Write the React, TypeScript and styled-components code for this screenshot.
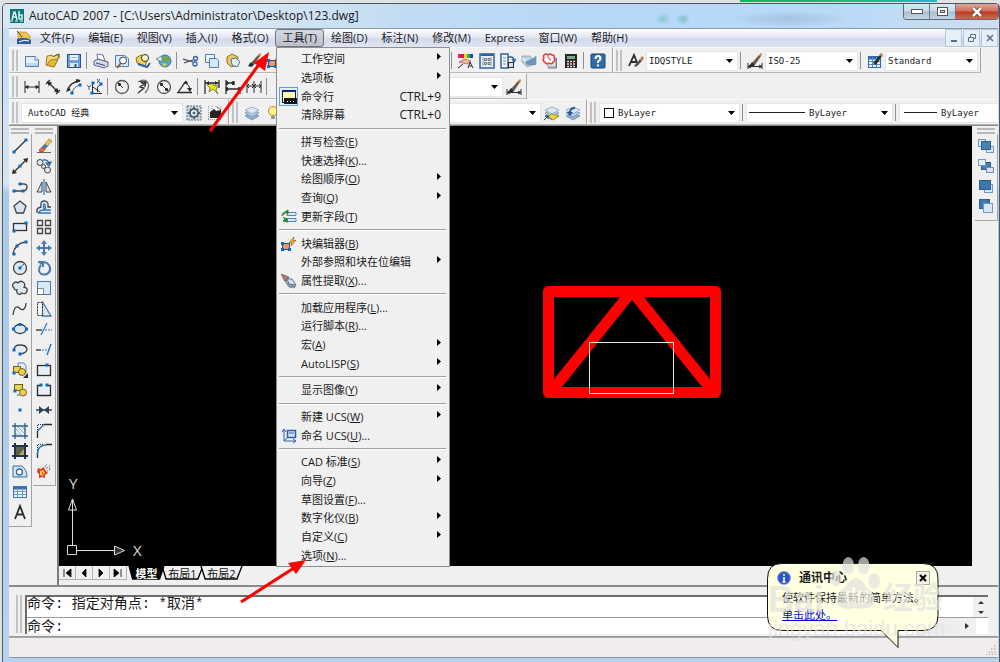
import React from "react";
import styled, { createGlobalStyle, css } from "styled-components";

const GlobalStyle = createGlobalStyle`
  *, *::before, *::after { box-sizing: border-box; }
  html, body { margin: 0; height: 100%; }
  body { background: #d9dcdc; overflow: hidden; }
  button, select, input { font: inherit; color: inherit; margin: 0; }
`;

const uiFont = `"Open Sans", "Noto Sans CJK SC", sans-serif`;
const monoFont = `"Liberation Mono", "Noto Sans CJK SC", monospace`;

/* ---------- icons ---------- */

const K = "#2b2b2b";
const B = "#2c62a3";
const L = "#d3e4f4";
const Y = "#f1cf4a";

const dot = (x: number, y: number, fill = "#0b6bc4") => (
  <rect x={x - 1.5} y={y - 1.5} width="3" height="3" fill={fill} />
);
const layers = (
  <>
    <path d="M1 11l7-3 7 3-7 4z" fill="#8fb2d4" stroke="#54769c" strokeWidth=".6" />
    <path d="M1 8l7-3 7 3-7 4z" fill="#b6cfe6" stroke="#54769c" strokeWidth=".6" />
    <path d="M1 5l7-3 7 3-7 4z" fill="#dce9f5" stroke="#6a8aae" strokeWidth=".6" />
  </>
);
const brush = (
  <>
    <path d="M5 10l7-8 2 1-6 9z" fill="#6b5a4c" />
    <path d="M12 2l2-2 1 1-1 3z" fill="#d07a35" />
    <path d="M2 13l3-4 3 3-3 2z" fill={K} />
  </>
);

const icons: Record<string, React.ReactNode> = {
  new: (
    <>
      <path d="M1.500 3.500h10l3 3v7h-13z" fill="#e2f0fb" stroke="#4f7fb0" />
      <path d="M2 10h12v3H2z" fill="#bcd7ee" />
      <path d="M11 3v4h4" fill="#fff" stroke="#4f7fb0" />
    </>
  ),
  open: (
    <>
      <path d="M2 3l5-1 1 2 6-3-1 5-4 8-8-2z" fill="#f3da7a" stroke="#9a7a1c" />
      <path d="M5 7l8-1-4 8-7-2z" fill="#e7b93a" stroke="#8b6a18" strokeWidth=".7" />
      <path d="M9 3l5-2v4" fill="none" stroke="#555" />
    </>
  ),
  save: (
    <>
      <rect x="1.500" y="1.500" width="13" height="13" fill="#6fa0d8" stroke="#24558f" />
      <rect x="4" y="2" width="8" height="5" fill="#eef5fb" />
      <path d="M5 4.500h6" stroke="#8fb2d8" />
      <rect x="4" y="10" width="8" height="4" fill="#dfeaf6" />
      <path d="M9.500 11v3" stroke="#24558f" strokeWidth="2" />
    </>
  ),
  print: (
    <>
      <path d="M4 1l6 1 2 6-7-1z" fill="#fff" stroke="#6777a5" />
      <path d="M1 8l4-2 10 3v4l-4 2-10-3z" fill="#d6dbea" stroke="#565f88" />
      <path d="M3 10l9 2.500" stroke="#3e4770" />
    </>
  ),
  preview: (
    <>
      <path d="M1.500 2.500h9l4 3v8h-13z" fill="#d9eaf8" stroke="#4f7fb0" />
      <circle cx="9" cy="7.500" r="3.500" fill="#f2f9ff" stroke="#445" />
      <path d="M7 10l-4 5" stroke="#a1532a" strokeWidth="2" />
    </>
  ),
  publish: (
    <>
      <path d="M1 5l5-3 7 3-3 8-8-3z" fill="#f0d052" stroke="#8a6a1c" />
      <circle cx="10" cy="5" r="3.500" fill="#fff6c9" stroke="#333" />
      <path d="M3 11l9 3 3-4" fill="none" stroke={B} strokeWidth="2" />
    </>
  ),
  globe: (
    <>
      <circle cx="9" cy="8" r="6" fill="#58a8cf" stroke="#38739a" />
      <path d="M8 3l4 1 1 4-4 1-3-3z" fill="#5eb74b" />
      <path d="M6 10l5 1-3 3z" fill="#f0c23b" />
      <path d="M10 3l3 2v3z" fill="#e2702f" />
      <path d="M0 6l6-3v6z" fill="#e8edf2" stroke="#667" strokeWidth=".7" />
    </>
  ),
  cut: (
    <>
      <path d="M0 6l10 3M1 10l9-3" stroke="#445" strokeWidth="1.300" />
      <circle cx="12.500" cy="5.500" r="2" fill="none" stroke={B} strokeWidth="1.300" />
      <circle cx="12" cy="11" r="2" fill="none" stroke={B} strokeWidth="1.300" />
    </>
  ),
  copyclip: (
    <>
      <path d="M1.500 1.500h9v8h-9z" fill="#eaf3fb" stroke="#4f7fb0" />
      <path d="M5.500 5.500h7l2 2v7h-9z" fill="#d7e8f7" stroke="#4f7fb0" />
    </>
  ),
  paste: (
    <>
      <path d="M2 4l5-3 6 3-1 8-6 2-4-4z" fill="#edc569" stroke="#93702a" />
      <path d="M6 6l5-1 4 4-3 5-5-2z" fill="#e3eef8" stroke="#577" />
    </>
  ),
  match: brush,
  block: (
    <>
      <rect x="1.500" y="7.500" width="7" height="6" fill="#f09468" stroke="#2c4f80" />
      <path d="M8 7l5-6-1 4 3-1-5 6 1-3z" fill="#f4ba1f" stroke="#6d5515" strokeWidth=".6" />
      {dot(1.5, 13.5)}
      {dot(8.5, 13.5)}
      {dot(1.5, 7.5)}
    </>
  ),
  props: (
    <>
      <path d="M0 1h3v4H0z" fill="#f0128c" />
      <path d="M3 1h3v4H3z" fill="#e71d1d" />
      <path d="M6 1h3v4H6z" fill="#f2d312" />
      <path d="M9 1h3v4H9z" fill="#28b839" />
      <path d="M12 1h3v4h-3z" fill="#283fd2" />
      <path d="M1 9l6-3 6 2-4 3z" fill="#f1b7a1" stroke="#9c4f43" strokeWidth=".7" />
      <path d="M0 15l5-4M10 15l2-6 3 6M11 13h3" stroke={K} fill="none" />
    </>
  ),
  design: (
    <>
      <rect x="1" y="1" width="14" height="14" fill="#e9f1f8" stroke={B} strokeWidth="1.500" />
      <path d="M2 2h12" stroke={B} strokeWidth="2" />
      <path d="M4 4v9M12 4v9" stroke="#7f9fc0" />
      <path d="M5.500 5.500h2v2h-2zM9 5.500h2v2H9zM5.500 9.500h2v2h-2zM9 9.500h2v2H9z" fill="#f6e7a0" stroke="#4b5a69" strokeWidth=".8" />
    </>
  ),
  palettes: (
    <>
      <rect x="1" y="1" width="7" height="14" fill="#f3f8fd" stroke={B} strokeWidth="1.500" />
      <path d="M3 5h3M3 8h3M3 11h3" stroke="#7a8a9a" />
      <path d="M8 4h3q3 0 3 4M12 6l2 3 2-3" fill="none" stroke={B} strokeWidth="1.300" />
      <rect x="8.500" y="9.500" width="5" height="5" fill="#d4e3ee" stroke={K} />
    </>
  ),
  sheetset: (
    <>
      <path d="M1 3h8l2 3 4-3v8l-9 3-5-5z" fill="#bcd2e2" stroke="#8097aa" strokeWidth=".7" />
      <path d="M4 9l11-5v8H6z" fill="#6c94b6" />
      <path d="M0 5l6 1-2 3z" fill="#e4ebef" />
    </>
  ),
  markup: (
    <>
      <path d="M6 5h8v9H6z" fill="#dfe3e8" stroke="#8a929c" />
      <path d="M14.500 5v10H6" fill="none" stroke="#6f7a86" />
      <path d="M2 2q2-2 4 0 2-2 4 0 3 0 2 3 2 2-1 4-1 3-4 1-3 2-4-1-3-1-1-4-1-2 0-3z" fill="#fff" stroke="#e2373b" strokeWidth="1.500" />
      <path d="M5 4q2-1 2 1t2 2" stroke="#e2373b" fill="none" />
    </>
  ),
  calc: (
    <>
      <rect x="2" y="1" width="12" height="14" fill="#2c2324" />
      <rect x="4" y="3" width="8" height="3" fill="#70b089" />
      <path d="M4 8.500h2m1 0h2m1 0h2M4 11h2m1 0h2m1 0h2M4 13.500h2m1 0h2m1 0h2" stroke="#e9d9d6" strokeWidth="1.300" />
    </>
  ),
  help: (
    <>
      <rect x="1" y="1" width="14" height="14" rx="1" fill="#2d6da8" stroke="#174775" />
      <path d="M5.500 6q0-3 2.500-3t2.500 2.500q0 1.500-2.500 3v1.500M8 11.500v2" fill="none" stroke="#fff" strokeWidth="2" />
    </>
  ),
  textstyle: (
    <>
      <path d="M1 13L6 2l4 10M3 9h5" fill="none" stroke={K} strokeWidth="1.800" />
      <path d="M6 13l6-7 2 2-6 6z" fill="#555" />
      <path d="M12 6l2-3 2 2-2 3z" fill="#c8793a" />
    </>
  ),
  dimstyle: (
    <>
      {brush}
      <path d="M1 10v6M15 10v6M1 13.500h14M4 12l-3 1.500L4 15M12 12l3 1.500L12 15" stroke={K} fill="none" />
    </>
  ),
  tablestyle: (
    <>
      <rect x="1.500" y="3.500" width="12" height="11" fill="#e5f0fa" stroke="#2d6cb1" />
      <path d="M2 5h11" stroke="#2d6cb1" strokeWidth="3" />
      <path d="M2 8.500h11M2 11.500h11M5.500 4v10M9.500 4v10" stroke="#4f8bc7" />
      <path d="M6 10l7-8 2 1-6 9z" fill={K} />
      <path d="M12 2l2-2 2 2-1 2z" fill="#c8793a" />
    </>
  ),
  dimlin: <path d="M1 2v12M15 2v12M1 8h14M4 6.500L1.500 8 4 9.500zM12 6.500L14.500 8 12 9.500z" fill={K} stroke={K} />,
  dimali: <path d="M1 5l4-4M11 15l4-4M3 3l10 10M3 3l1 3 2-2zM13 13l-1-3-2 2z" fill={K} stroke={K} strokeWidth="1.300" />,
  dimarc: (
    <>
      <path d="M2 11Q4 3 14 2" fill="none" stroke={K} strokeWidth="1.500" />
      <path d="M6 14q1-6 8-8" fill="none" stroke="#667" />
      {dot(6, 14)}
      {dot(14, 6)}
      <path d="M0 13l2-5 3 3zM15 1l-5-1v4z" fill={K} />
    </>
  ),
  dimord: (
    <>
      <path d="M5 14.500h10M5.500 14V4M6 8l7 5M10.500 13V8l4-3" stroke={K} fill="none" />
      <path d="M0 6l2 2 2-2M2 8v3M10 0l3 4M13 0l-3 4" stroke={B} fill="none" />
      {dot(5, 14)}
      {dot(14, 5)}
      {dot(6, 4)}
    </>
  ),
  dimrad: (
    <>
      <circle cx="8" cy="8" r="6.500" fill="none" stroke="#555" strokeWidth="1.300" />
      <path d="M9 9L4 4M4 4l3 1-2 2z" fill={K} stroke={K} />
    </>
  ),
  dimjog: (
    <>
      <path d="M3 3q7-4 10 1 2 5-3 10" fill="none" stroke="#777" strokeWidth="1.300" />
      <path d="M3 14l6-5-4-1 5-4M6 3l5 0-1 4z" fill="none" stroke={K} strokeWidth="1.300" />
    </>
  ),
  dimdia: (
    <>
      <circle cx="8" cy="8" r="6.500" fill="none" stroke="#555" strokeWidth="1.300" />
      <path d="M4 4l8 8M4 4l3 1-2 2zM12 12l-3-1 2-2z" fill={K} stroke={K} />
    </>
  ),
  dimang: (
    <>
      <path d="M15 13.500H1L9 2" fill="none" stroke={K} strokeWidth="1.300" />
      <path d="M8 4q5 2 5 8" fill="none" stroke={K} />
      <path d="M6 4l4-2 1 3zM10 9l5 0-2 4z" fill={K} />
    </>
  ),
  qdim: (
    <>
      <path d="M3 6l6-2 1 3 4-1-2 5 2 4-5-5-4 3 1-4z" fill="#e6e21f" stroke="#5b5a12" strokeWidth=".7" />
      <path d="M1 1v14M15 1v8M1 4h14" stroke={K} strokeWidth="1.300" />
      <path d="M2 4l3-2v4zM14 4l-3-2v4z" fill={K} />
    </>
  ),
  dimbase: <path d="M1 1v14M9 2v4M15 8v7M1 4h8M1 10h14M3 2.500L1 4l2 1.500M7 2.500L9 4 7 5.500M3 8.500L1 10l2 1.500M13 8.500l2 1.500-2 1.500" fill="none" stroke={K} strokeWidth="1.300" />,
  dimcont: <path d="M1 2v12M8 2v12M15 2v12M1 7h14M3 5L1 7l2 2M6 5l2 2-2 2M10 5L8 7l2 2M13 5l2 2-2 2" fill="none" stroke={K} />,
  gear: (
    <>
      <rect x="1" y="1" width="14" height="14" fill="#c8d8e4" stroke="#54687a" strokeDasharray="2 1" />
      <circle cx="8" cy="8" r="4" fill="#f6f8fa" stroke="#4e6272" strokeWidth="2" />
      <circle cx="8" cy="8" r="1.500" fill="#4e6272" />
      <path d="M8 2v2M8 12v2M2 8h2M12 8h2M4 4l1 1M12 4l-1 1M4 12l1-1M12 12l-1-1" stroke="#4e6272" strokeWidth="2" />
    </>
  ),
  myspace: (
    <>
      <path d="M1.500 1v14M1 14.500h14M5 1v3M9 1v2M14 1v3" stroke="#999" strokeDasharray="1 1" />
      <path d="M3 13V7l4-3 2 2 5-1v8z" fill="#252525" />
      <path d="M10 2l4 3" stroke="#666" />
    </>
  ),
  layers,
  bulb: (
    <>
      <circle cx="8" cy="6" r="4.500" fill="#fff38a" stroke="#b2941a" />
      <path d="M6 11h4v3H6z" fill="#9a9a9a" />
    </>
  ),
  layermake: (
    <>
      {layers}
      <path d="M4 11l4-2 7 2-6 4z" fill="#f0d42a" stroke="#88761d" strokeWidth=".6" />
      <path d="M0 15l4-4M1 11h3v3" stroke="#1c3e7c" fill="none" />
    </>
  ),
  layerprev: (
    <>
      {layers}
      <path d="M5 10q-1-7 5-7" fill="none" stroke="#25568f" strokeWidth="2" />
      <path d="M2 7h6l-3 4z" fill="#25568f" />
    </>
  ),
  line: (<><path d="M2 14L14 2" stroke={K} strokeWidth="1.300" />{dot(2, 14)}{dot(14, 2)}</>),
  xline: (<><path d="M1 15L15 1" stroke={K} strokeWidth="1.300" /><path d="M0 16l1-5 4 4zM16 0l-1 5-4-4z" fill={K} />{dot(8, 8)}</>),
  pline: (<><path d="M1 12h11q3-1 3-4 0-3-3-3H8" fill="none" stroke="#444" strokeWidth="1.300" />{dot(2, 12)}{dot(11, 12)}{dot(8, 5)}</>),
  polygon: <path d="M8 2l6 5-2.500 7h-7L2 7z" fill="#d8e3ee" stroke="#444" strokeWidth="1.300" />,
  rect: (<><rect x="1.500" y="4.500" width="13" height="7" fill="#e4edf5" stroke="#333" strokeWidth="1.300" />{dot(2, 12)}{dot(14, 4)}</>),
  arc: (<><path d="M1 14Q3 3 14 2" fill="none" stroke="#444" strokeWidth="1.300" />{dot(2, 14)}{dot(5, 6)}{dot(14, 2)}</>),
  circle: (<><circle cx="8" cy="8" r="6.500" fill="#dce8f3" stroke="#444" strokeWidth="1.300" /><path d="M8 8l4-4" stroke={B} />{dot(8, 8)}</>),
  cloud: <path d="M2 8q-3-3 0-5 2-2 4 0 2-3 5-1 3 2 1 5 4 1 3 4-1 4-5 2-2 2-4 1-2-2-1-4-3 0-3-2z" fill="#dde7f0" stroke="#444" strokeWidth="1.300" />,
  spline: <path d="M1 14Q2 5 6 6q4 4 6 2 2-2 2-6" fill="none" stroke="#444" strokeWidth="1.300" />,
  ellipse: (<><ellipse cx="8" cy="8" rx="6" ry="4.500" fill="#dce8f3" stroke="#444" strokeWidth="1.300" />{dot(1.5, 8)}{dot(8, 3.5)}{dot(14.5, 8)}</>),
  earc: (<><path d="M2 9q0-5 6-5t7 4q0 4-7 5" fill="#e3ebf3" stroke="#444" strokeWidth="1.300" />{dot(2, 9)}{dot(8, 13)}</>),
  insert: (
    <>
      <path d="M6 1h6l2 3v7H6z" fill="#e3edf6" stroke="#6a8aab" />
      <rect x="1.500" y="4.500" width="7" height="6" fill={Y} stroke="#6b6426" />
      <circle cx="10" cy="10" r="3.500" fill={Y} stroke="#6b6426" />
      {dot(2, 11)}
      <path d="M16 11v5h-5z" fill={K} />
    </>
  ),
  mkblock: (<><rect x="2.500" y="2.500" width="8" height="6" fill={Y} stroke="#6b6426" /><circle cx="11" cy="10.500" r="3.500" fill={Y} stroke="#6b6426" />{dot(3, 9)}<path d="M5 13h3" stroke={B} /></>),
  point: dot(8, 8),
  hatch: (
    <>
      <rect x="3.500" y="3.500" width="9" height="9" fill="#edf4fa" />
      <path d="M4 6l6 7M4 10l3 3M6 4l7 7M10 4l3 3" stroke="#5f93c0" strokeWidth=".8" />
      <path d="M3 0v16M13 0v16M0 3h16M0 13h16" stroke="#315b88" strokeWidth="1.300" />
    </>
  ),
  gradient: (
    <>
      <rect x="3" y="3" width="10" height="10" fill="#5f614b" />
      <path d="M6 13l7-8v8z" fill="#b5a95b" />
      <path d="M3 0v16M13 0v16M0 3h16M0 13h16" stroke="#23304a" strokeWidth="2" />
    </>
  ),
  region: (<><path d="M1 3h9q5 4 5 11H1z" fill={L} stroke="#3b6a9b" /><circle cx="7.500" cy="9" r="3" fill="#fff" stroke="#3b6a9b" strokeWidth="1.300" /></>),
  table: (<><rect x="1.500" y="2.500" width="13" height="11" fill="#eff6fc" stroke="#4174b0" /><path d="M1 4h14" stroke="#3b6fae" strokeWidth="3" /><path d="M2 7.500h12M2 10.500h12M5.500 4v9M10.500 4v9" stroke="#6998c9" /></>),
  mtext: <path d="M3 15L8 2l5 13M5 10.500h6" fill="none" stroke={K} strokeWidth="1.800" />,
  erase: (
    <>
      <path d="M1 14.500h14" stroke="#666" />
      <path d="M6 9l7-8 3 2-7 8z" fill="#e7c84d" stroke="#7b6a27" strokeWidth=".6" />
      <path d="M9 6l3 2-3 3-3-2z" fill="#4b79ab" />
      <path d="M3 12l3-3 3 2-2 3-3 0z" fill="#e4685a" stroke="#8e362e" strokeWidth=".6" />
    </>
  ),
  copy: (
    <>
      <circle cx="4" cy="4.500" r="3" fill="#dfe9f2" stroke="#444" />
      <circle cx="7.500" cy="8.500" r="2" fill="#dfe9f2" stroke="#444" />
      <circle cx="11.500" cy="12" r="3" fill="#dfe9f2" stroke="#444" />
      <path d="M7 2q5-1 6 4M10 5l3 3 2-4z" fill="none" stroke={B} strokeWidth="1.300" />
    </>
  ),
  mirror: (<><path d="M6 3v10H1z" fill="#d8e0e7" stroke="#444" /><path d="M10 3v10h5z" fill="#d8e0e7" stroke="#444" /><path d="M8 0v16" stroke="#2e87d2" strokeWidth="1.300" /></>),
  offset: (<><path d="M1 14v-3q0-2 4-3-1-6 3-6 5 0 4 6h3" fill="#e3edf6" stroke="#444" strokeWidth="1.300" /><path d="M3 14q0-3 5-3-1-6 0-6 2 0 1 6h6M2 14h13" fill="none" stroke="#2e77bd" strokeWidth="1.300" /></>),
  array: <path d="M1.500 1.500h5v5h-5zM9.500 1.500h5v5h-5zM1.500 9.500h5v5h-5zM9.500 9.500h5v5h-5z" fill="#eef2f6" stroke="#444" strokeWidth="1.300" />,
  move: <path d="M8 0l3 4H9v3h3V5l4 3-4 3V9H9v3h2l-3 4-3-4h2V9H4v2L0 8l4-3v2h3V4H5z" fill="#4a7bb0" />,
  rotate: <path d="M4 4q5-4 9 1 3 6-2 9-6 2-8-3 0-4 2-6M2 2h5v5" fill="none" stroke="#4a7bb0" strokeWidth="2" />,
  scale: (<><rect x="1.500" y="1.500" width="13" height="13" fill="#dbe9f5" stroke="#4a7bb0" /><rect x="1.500" y="8.500" width="6" height="6" fill="#fff" stroke={K} strokeDasharray="1 1" /></>),
  stretch: (<><path d="M6.500 1v14H15z" fill="#dbe9f5" stroke="#4a7bb0" strokeWidth="1.300" /><path d="M1.500 1.500h5v13h-5z" fill="#f3f6f9" stroke={K} strokeDasharray="2 1" /></>),
  trim: (<><path d="M0 9h6" stroke={K} strokeWidth="1.300" /><path d="M5 14L11 2" stroke="#2e77bd" strokeWidth="1.300" /><path d="M9 9h7" stroke="#2e77bd" strokeDasharray="2 1" /></>),
  extend: (<><path d="M0 9h5" stroke={K} strokeWidth="1.300" /><path d="M11 14l4-11" stroke="#2e77bd" strokeWidth="1.500" /><path d="M6 9h6" stroke="#2e77bd" strokeDasharray="2 1" /></>),
  breakpt: (<><rect x="1.500" y="3.500" width="13" height="10" fill="#e6eef6" stroke={K} strokeWidth="1.300" />{dot(11, 3)}</>),
  breakat: (<><path d="M5 3.500H1.500v10h13v-10H11" fill="#e6eef6" stroke={K} strokeWidth="1.300" />{dot(5, 3)}{dot(11, 3)}</>),
  join: (<><path d="M0 8h16" stroke={K} strokeWidth="1.300" /><path d="M3 4l5 4-5 4zM13 4L8 8l5 4z" fill="#23405f" /></>),
  chamfer: (<><path d="M1.500 15V8M8 1.500h8" stroke={K} strokeWidth="1.300" /><path d="M1.500 8L8 1.500" stroke="#2e77bd" strokeWidth="1.500" /><path d="M1.500 7V1.500H8" stroke={K} strokeDasharray="1 1" fill="none" /></>),
  fillet: (<><path d="M1.500 15v-5M10 1.500h6" stroke={K} strokeWidth="1.300" /><path d="M1.500 11q0-9 9-9" fill="none" stroke="#2e77bd" strokeWidth="1.500" /><path d="M1.500 7V1.500H8" stroke={K} strokeDasharray="1 1" fill="none" /></>),
  explode: (
    <>
      <path d="M2 5l3 1 3-2 1 3 3 3-3 2 0 3-3-1-3 1 0-4-2-2z" fill="#df3a25" />
      <path d="M4 8l3-1 2 3-2 3-3-1z" fill="#f4d04c" />
      <path d="M6 9l2 2-2 1z" fill="#df3a25" />
      <path d="M10 6l4-4M11 8l4-2M9 4l2-3M13 5l2 0" stroke="#555" strokeDasharray="1 1" />
    </>
  ),
  front: (
    <>
      <rect x=".5" y="1.500" width="7" height="7" fill="#dceaf6" stroke="#7896b8" />
      <rect x="8.500" y="8.500" width="7" height="6" fill="#dceaf6" stroke="#7896b8" />
      <rect x="3.500" y="3.500" width="9" height="8" fill="#4a7fb4" stroke="#2e5f92" />
    </>
  ),
  back: (
    <>
      <rect x="3.500" y="4.500" width="9" height="7" fill="#4a7fb4" stroke="#2e5f92" />
      <rect x=".5" y="1.500" width="7" height="6" fill="#e6f0f9" stroke="#7896b8" />
      <rect x="8.500" y="9.500" width="7" height="5" fill="#d6e6f5" stroke="#6c8db4" />
    </>
  ),
  above: (<><rect x="6.500" y="6.500" width="8" height="8" fill="#d6e8f6" stroke="#6e9ac4" /><rect x="1.500" y="2.500" width="11" height="9" fill="#3f76ae" stroke="#2e5f92" /></>),
  under: (<><rect x="1.500" y="1.500" width="10" height="9" fill="#3f76ae" stroke="#2e5f92" /><rect x="5.500" y="5.500" width="9" height="9" fill="#d6e8f6" stroke="#6e9ac4" /></>),
  cmdline: (
    <>
      <rect x="1.500" y="1.500" width="13" height="12" fill="#fdfbb4" stroke="#1a1a1a" />
      <path d="M1 2h14" stroke="#12227c" strokeWidth="2" />
      <path d="M3 9h13v6H3z" fill="#171717" />
      <path d="M6 12.500h1m2 0h1m2 0h1" stroke="#fff" />
    </>
  ),
  field: (
    <>
      <path d="M6 3.500h9v3H6zM6 9.500h9v3H6z" fill="#d9e9f7" stroke="#5683b0" />
      <path d="M1 7q0-4 5-4M7 1v4L4 3zM7 10q-4 1-5-2M2 12l5 1-2-4z" fill="#268a2d" stroke="#268a2d" />
    </>
  ),
  attr: (
    <>
      <path d="M0 1l8 3-2 4-3-1z" fill="#b07873" stroke="#69423e" strokeWidth=".6" />
      <path d="M6 6l5 0 4 6-7-1z" fill="#d6e4f0" stroke="#56718c" />
      <path d="M3 7l6 5 6 1-2 2-5-1z" fill="#8b9bb0" stroke="#5a6878" strokeWidth=".6" />
    </>
  ),
  ucs: (
    <>
      <path d="M3 13V2M3 13h11M1 4l2-3 2 3M12 11l3 2-3 2" stroke={B} fill="none" />
      <rect x="6.500" y="2.500" width="8" height="7" fill="#d5e6f5" stroke={B} strokeWidth="1.500" />
      <path d="M8 5h5M3 13l4-4" stroke={B} />
    </>
  ),
};

const IconSvg = styled.svg`
  display: block;
  width: 16px;
  height: 16px;
  flex: none;
`;
const Icon = ({ name }: { name: string }) => (
  <IconSvg viewBox="0 0 16 16" aria-hidden="true">{icons[name]}</IconSvg>
);

/* ---------- window frame ---------- */

const Desktop = styled.div`
  position: relative;
  display: flex;
  flex-direction: column;
  width: 100%;
  height: 100vh;
  min-height: 600px;
  background: #dfe2e2;
  overflow: hidden;
  font: 11px/16px ${uiFont};
  color: #1a1a1a;
`;
const DesktopStrip = styled.div`
  flex: none;
  height: 3px;
  display: flex;
  justify-content: flex-end;
  padding-right: 63px;
`;
const Progress = styled.div`
  width: 197px;
  height: 2px;
  background: linear-gradient(90deg, #10b65c, #19bd7b 60%, #23b7cf);
`;
const Frame = styled.div`
  flex: 1;
  min-height: 0;
  display: flex;
  flex-direction: column;
  margin-left: 2px;
  padding: 0 1px 4px 6px;
  border: 1px solid #4b5964;
  border-bottom: 0;
  border-radius: 5px 5px 0 0;
  background: linear-gradient(180deg, #c2ddf5 0, #d3e4f3 180px, #a9c9e8 190px, #b7d3ee 100%);
`;
const TitleBar = styled.header`
  flex: none;
  height: 24px;
  margin: 0 -1px 0 -6px;
  padding-left: 7px;
  display: flex;
  align-items: center;
  gap: 5px;
  border-radius: 4px 4px 0 0;
  font-size: 12px;
  background:
    radial-gradient(ellipse 8px 6px at 660px 15px, #86c9c9, transparent),
    radial-gradient(ellipse 7px 6px at 680px 15px, #7fc4c4, transparent),
    radial-gradient(ellipse 60px 8px at 786px 15px, #a6c2dd, transparent),
    linear-gradient(90deg, #d9e7f3 0, #e5eef5 12%, #c3dcf3 40%, #b6d7f7 60%, #b9d9f7 84%, #cfdfec 100%);
`;
const TitleText = styled.h1`
  flex: 1;
  margin: 0;
  font: inherit;
  white-space: nowrap;
  overflow: hidden;
`;
const WindowButtons = styled.div`
  align-self: flex-start;
  display: flex;
  height: 16px;
  border: 1px solid #5b6b7b;
  border-top: 0;
  border-radius: 0 0 4px 4px;
  overflow: hidden;
`;
const WindowButton = styled.button<{ $close?: boolean }>`
  width: ${(p) => (p.$close ? 42 : 26)}px;
  padding: 0;
  display: grid;
  place-items: center;
  border: 0;
  border-right: ${(p) => (p.$close ? 0 : 1)}px solid #6d7c8b;
  background: ${(p) =>
    p.$close
      ? "linear-gradient(#e0a699 0, #cf6d5b 48%, #b93a24 52%, #cf6a4b 100%)"
      : "linear-gradient(#dde8f1 0, #cad8e4 48%, #aabdcd 52%, #c4d6e4 100%)"};
`;

const Client = styled.div`
  flex: 1;
  min-height: 0;
  display: flex;
  flex-direction: column;
  background: #f0f0f0;
  border-top: 1px solid #8e9bac;
  border-bottom: 1px solid #8997a8;
`;
const MenuBar = styled.nav`
  flex: none;
  height: 18px;
  display: flex;
  align-items: stretch;
  padding-left: 7px;
  background: linear-gradient(#fdfdff, #e4e8f5 45%, #d3daec 55%, #dfe4f3);
`;
const MenuLogo = styled.span`
  margin-right: 1px;
  display: flex;
  align-items: center;
`;
const MenuButton = styled.button<{ $open?: boolean }>`
  padding: 0 6px;
  border: 1px solid ${(p) => (p.$open ? "#6f747d" : "transparent")};
  border-radius: 3px;
  line-height: 16px;
  white-space: nowrap;
  background: ${(p) => (p.$open ? "linear-gradient(#d4d8e1, #b9bfcb)" : "none")};
`;
const MdiButtons = styled.div`
  margin-left: auto;
  display: flex;
  gap: 1px;
`;
const MdiButton = styled.button`
  width: 17px;
  padding: 0;
  display: grid;
  place-items: center;
  border: 1px solid #b3c7da;
  background: #e6eef6;
`;

/* ---------- toolbars ---------- */

const Body = styled.div`
  position: relative;
  flex: 1;
  min-height: 0;
  display: flex;
  flex-direction: column;
`;
const ToolbarRow = styled.div`
  flex: none;
  height: 26px;
  display: flex;
  overflow: hidden;
`;
const Toolbar = styled.div<{ $grow?: boolean }>`
  flex: ${(p) => (p.$grow ? "1 0 auto" : "none")};
  display: flex;
  align-items: center;
  padding: 1px 0 0 2px;
  border: 1px solid #fafafa;
  border-right-color: #a5a5a5;
  border-bottom-color: #b6b6b6;
`;
const Grip = styled.span<{ $flat?: boolean }>`
  flex: none;
  ${(p) =>
    p.$flat
      ? css`
          width: 18px;
          height: 6px;
          border-top: 2px solid #b9b9b9;
          border-bottom: 2px solid #b9b9b9;
        `
      : css`
          width: 6px;
          height: 21px;
          margin-right: 3px;
          border-left: 2px solid #c2c2c2;
          border-right: 2px solid #c2c2c2;
        `}
`;
const ToolButton = styled.button`
  width: 21px;
  height: 20px;
  padding: 0;
  display: grid;
  place-items: center;
  border: 0;
  background: none;
`;
const Divider = styled.span`
  flex: none;
  width: 1px;
  height: 17px;
  margin: 0 3px 0 2px;
  background: #8f8f8f;
`;
const Covered = styled.span<{ $w: number }>`
  flex: none;
  width: ${(p) => p.$w}px;
`;
const ComboBox = styled.label<{ $w: number; $pad: number }>`
  position: relative;
  flex: none;
  width: ${(p) => p.$w}px;
  height: 20px;
  display: flex;
  align-items: center;
  gap: 4px;
  padding: 0 4px 0 ${(p) => p.$pad}px;
  background: #fff;
  border: 1px solid #e4e6ee;
  font: 9px/16px "DejaVu Sans Mono", "Noto Sans CJK SC", monospace;
  svg { flex: none; }
`;
const ComboSelect = styled.select`
  flex: 1;
  min-width: 0;
  padding: 0;
  border: 0;
  outline: 0;
  appearance: none;
  background: none;
`;
const Arrow = () => (
  <svg width="7" height="4" aria-hidden="true"><path d="M0 0h7L3.500 4z" fill="#000" /></svg>
);
type ComboProps = { w: number; label: string; value: string; mark?: React.ReactNode; pad?: number };
const Combo = ({ w, label, value, mark, pad = 2 }: ComboProps) => (
  <ComboBox $w={w} $pad={pad}>
    {mark}
    <ComboSelect aria-label={label} defaultValue={value}>
      <option>{value}</option>
    </ComboSelect>
    <Arrow />
  </ComboBox>
);
const Tools = ({ names }: { names: string }) => (
  <>
    {names.split(" ").map((n, i) =>
      n === "|" ? <Divider key={i} /> : (
        <ToolButton key={i} type="button" aria-label={n}><Icon name={n} /></ToolButton>
      )
    )}
  </>
);
const LineMark = ({ w }: { w: number }) => (
  <svg width={w} height="1" aria-hidden="true"><path d={`M0 .5h${w}`} stroke="#222" /></svg>
);

/* ---------- work area ---------- */

const Workspace = styled.div`
  flex: 1;
  min-height: 0;
  display: flex;
  border-top: 1px solid #8a8a8a;
`;
const Dock = styled.aside<{ $right?: boolean }>`
  flex: none;
  width: ${(p) => (p.$right ? 26 : 48)}px;
  padding-left: ${(p) => (p.$right ? 3 : 0)}px;
  display: flex;
  align-items: flex-start;
  gap: 1px;
`;
const ToolColumn = styled.div<{ $even?: boolean }>`
  width: 23px;
  display: grid;
  grid-auto-rows: ${(p) => (p.$even ? "20px" : "20px 20px 21px")};
  justify-items: center;
  align-items: center;
  padding: 2px 0 4px;
  border: solid #a3a3a3;
  border-width: 0 1px 1px 0;
`;
const ColumnHead = styled.div`
  flex: none;
  padding: 2px 0 0 2px;
`;
const ColumnStack = styled.div`
  display: flex;
  flex-direction: column;
`;
const Drawing = styled.main`
  flex: 1;
  min-width: 0;
  display: flex;
  flex-direction: column;
  border-left: 2px solid #7b7b7b;
`;
const Canvas = styled.div`
  position: relative;
  flex: 1;
  min-height: 0;
  overflow: hidden;
  background: #000;
`;
const Truss = styled.svg`
  position: absolute;
  left: 484px;
  top: 160px;
`;
const UcsMark = styled.svg`
  position: absolute;
  left: 7px;
  bottom: 7px;
  font: 15px ${uiFont};
`;
const TabRow = styled.div`
  flex: none;
  height: 19px;
  display: flex;
  align-items: flex-start;
  background: #f0f0f0;
`;
const TabNav = styled.button`
  width: 17px;
  height: 14px;
  padding: 0;
  display: grid;
  place-items: center;
  border: solid #b5b5b5;
  border-width: 0 1px 1px 0;
  background: #f0f0f0;
`;
const Tab = styled.button<{ $active?: boolean }>`
  position: relative;
  width: ${(p) => (p.$active ? 35 : 41)}px;
  height: 14px;
  padding: 0;
  border: 0;
  line-height: 13px;
  background: none;
  color: ${(p) => (p.$active ? "#fff" : "#111")};
  font-weight: ${(p) => (p.$active ? 700 : 400)};
  margin-right: -2px;
  z-index: ${(p) => (p.$active ? 1 : 0)};
  svg { position: absolute; inset: 0; width: 100%; height: 100%; overflow: visible; }
  span { position: relative; }
`;
const Tabs = styled.div`
  display: flex;
  padding-left: 2px;
`;

/* ---------- drop-down menu ---------- */

const Menu = styled.div`
  position: absolute;
  left: 267px;
  top: 0;
  bottom: 18px;
  width: 174px;
  display: flex;
  flex-direction: column;
  padding: 2px 3px 1px 2px;
  background: #f0f0f0;
  border: 1px solid #8f8f8f;
  z-index: 3;
`;
const MenuRow = styled.button`
  flex: 1 1 18px;
  min-height: 0;
  display: flex;
  align-items: center;
  padding: 0 5px 0 0;
  border: 0;
  background: none;
  text-align: left;
  white-space: nowrap;
`;
const MenuIcon = styled.span<{ $checked?: boolean }>`
  flex: none;
  width: 19px;
  height: 19px;
  margin-right: 3px;
  display: grid;
  place-items: center;
  border: ${(p) => (p.$checked ? "1px solid #5aa1e8" : "0")};
  background: ${(p) => (p.$checked ? "#e2eefb" : "none")};
`;
const Shortcut = styled.span`
  margin-left: auto;
  font-size: 12px;
`;
const SubArrow = styled.svg`
  margin: 0 0 5px auto;
`;
const MenuLine = styled.hr`
  flex: none;
  width: 100%;
  height: 2px;
  margin: 3px 0;
  border: 0;
  border-top: 1px solid #a0a0a0;
  background: #fff;
`;

type Item = { t: string; k?: string; end?: string; icon?: string; checked?: boolean; sub?: boolean; cut?: string };
const menu: Item[][] = [
  [
    { t: "工作空间", sub: true },
    { t: "选项板", sub: true },
    { t: "命令行", icon: "cmdline", checked: true, cut: "CTRL+9" },
    { t: "清除屏幕", cut: "CTRL+0" },
  ],
  [
    { t: "拼写检查", k: "E" },
    { t: "快速选择", k: "K", end: "..." },
    { t: "绘图顺序", k: "O", sub: true },
    { t: "查询", k: "Q", sub: true },
    { t: "更新字段", k: "T", icon: "field" },
  ],
  [
    { t: "块编辑器", k: "B", icon: "block" },
    { t: "外部参照和块在位编辑", sub: true },
    { t: "属性提取", k: "X", end: "...", icon: "attr" },
  ],
  [
    { t: "加载应用程序", k: "L", end: "..." },
    { t: "运行脚本", k: "R", end: "..." },
    { t: "宏", k: "A", sub: true },
    { t: "AutoLISP", k: "S", sub: true },
  ],
  [{ t: "显示图像", k: "Y", sub: true }],
  [
    { t: "新建 UCS", k: "W", sub: true },
    { t: "命名 UCS", k: "U", end: "...", icon: "ucs" },
  ],
  [
    { t: "CAD 标准", k: "S", sub: true },
    { t: "向导", k: "Z", sub: true },
    { t: "草图设置", k: "F", end: "..." },
    { t: "数字化仪", k: "B", sub: true },
    { t: "自定义", k: "C", sub: true },
    { t: "选项", k: "N", end: "..." },
  ],
];

/* ---------- command window ---------- */

const CommandPanel = styled.section`
  flex: none;
  height: 52px;
  display: flex;
  padding: 8px 10px 2px 7px;
  border-top: 2px solid #8b8b8b;
  border-bottom: 1px solid #9a9a9a;
`;
const CommandBox = styled.div`
  flex: 1;
  min-width: 0;
  display: flex;
  flex-direction: column;
  border: solid #6d6d6d;
  border-width: 2px 0 0 2px;
  background: #fff;
  font: 14px/18px ${monoFont};
`;
const CommandGrip = styled(Grip)`
  height: 38px;
`;
const CommandLog = styled.div`
  flex: none;
  height: 21px;
  display: flex;
  justify-content: space-between;
  border-bottom: 1px solid #9c9c9c;
  line-height: 15px;
  white-space: pre;
`;
const Spinner = styled.div`
  width: 15px;
  display: grid;
  grid-template-rows: 1fr 1fr;
  background: #f0f0f0;
`;
const SmallButton = styled.button`
  padding: 0;
  border: 0;
  display: grid;
  place-items: center;
  background: #f0f0f0;
`;
const CommandEntry = styled.div`
  flex: 1;
  min-height: 0;
  display: flex;
  line-height: 18px;
  label { white-space: pre; }
`;
const CommandInput = styled.input`
  flex: 1;
  min-width: 0;
  padding: 0;
  border: 0;
  outline: 0;
  background: none;
`;
const HScroll = styled.div`
  width: 60px;
  display: flex;
  justify-content: flex-end;
  margin-right: 12px;
  background: #ededed;
`;
const StatusBar = styled.footer`
  flex: none;
  height: 20px;
  display: flex;
  align-items: flex-end;
  justify-content: flex-end;
  border-top: 1px solid #a9a9a9;
  padding: 2px;
  background: #f0edec;
`;

/* ---------- overlays ---------- */

const Balloon = styled.aside`
  position: absolute;
  right: 61px;
  bottom: 13px;
  width: 172px;
  height: 86px;
  z-index: 4;
`;
const BalloonShape = styled.svg`
  position: absolute;
  inset: 0;
`;
const BalloonBody = styled.div`
  position: relative;
  padding: 6px 9px 0 10px;
`;
const BalloonHead = styled.div`
  display: flex;
  align-items: center;
  height: 17px;
  margin-bottom: 3px;
  gap: 8px;
  h2 { flex: 1; margin: 0; font: 700 12px/16px ${uiFont}; }
`;
const CloseButton = styled.button`
  width: 14px;
  height: 14px;
  padding: 0;
  display: grid;
  place-items: center;
  border: 1px solid #aaa;
  background: #f4f2e4;
`;
const BalloonText = styled.p`
  margin: 0 0 0 5px;
  white-space: nowrap;
  line-height: 17px;
  a { color: #0000e0; }
`;
const Watermark = styled.div`
  position: absolute;
  right: 54px;
  bottom: 22px;
  z-index: 5;
  width: 178px;
  opacity: 0.7;
  color: #e2e2de;
  pointer-events: none;
  font: 700 36px/36px "Liberation Sans", "Noto Sans CJK SC", sans-serif;
`;
const WatermarkBrand = styled.div`
  display: flex;
  align-items: flex-end;
  small { font-size: 30px; line-height: 40px; }
  svg { flex: none; margin: 0 0 5px 5px; }
`;
const WatermarkUrl = styled.div`
  font-size: 22px;
  line-height: 22px;
  font-weight: 400;
`;
const Pointer = styled.svg<{ $x: number; $y: number }>`
  position: absolute;
  left: ${(p) => p.$x}px;
  top: ${(p) => p.$y}px;
  z-index: 6;
  pointer-events: none;
`;

const topMenus = [
  "文件(F)", "编辑(E)", "视图(V)", "插入(I)", "格式(O)", "工具(T)",
  "绘图(D)", "标注(N)", "修改(M)", "Express", "窗口(W)", "帮助(H)",
];
const drawTools = "line xline pline polygon rect arc circle cloud spline ellipse earc insert mkblock point hatch gradient region table mtext";
const modifyTools = "erase copy mirror offset array move rotate scale stretch trim extend breakpt breakat join chamfer fillet explode";

const Column = ({ names, even }: { names: string; even?: boolean }) => (
  <ColumnStack>
    <ColumnHead><Grip as="div" $flat /></ColumnHead>
    <ToolColumn $even={even}><Tools names={names} /></ToolColumn>
  </ColumnStack>
);

export default function App() {
  return (
    <Desktop>
      <GlobalStyle />
      <DesktopStrip><Progress /></DesktopStrip>
      <Frame>
        <TitleBar>
          <svg width="14" height="14" viewBox="0 0 14 14" aria-hidden="true">
            <rect width="14" height="14" fill="#0e7474" />
            <path d="M2 11L4 3h1l2 8M3 8h3M9 2v8M9 6h3v4H9" stroke="#d8f3ef" strokeWidth="1.500" fill="none" />
            <path d="M0 12h14" stroke="#f2f6f6" strokeDasharray="3 2" />
          </svg>
          <TitleText>AutoCAD 2007 - [C:\Users\Administrator\Desktop\123.dwg]</TitleText>
          <WindowButtons>
            <WindowButton type="button" aria-label="minimize">
              <svg width="12" height="5"><rect x=".5" y=".5" width="11" height="4" fill="#fff" stroke="#555" /></svg>
            </WindowButton>
            <WindowButton type="button" aria-label="restore">
              <svg width="11" height="9"><rect x=".5" y=".5" width="10" height="8" fill="#fff" stroke="#555" /><rect x="3.500" y="3.500" width="4" height="2" fill="#c5d3df" stroke="#555" /></svg>
            </WindowButton>
            <WindowButton type="button" $close aria-label="close">
              <svg width="12" height="10" viewBox="0 0 12 10"><path d="M2 1l8 8M10 1L2 9" stroke="#5f3027" strokeWidth="4" /><path d="M2 1l8 8M10 1L2 9" stroke="#fff" strokeWidth="2.500" /></svg>
            </WindowButton>
          </WindowButtons>
        </TitleBar>
        <Client>
          <MenuBar>
            <MenuLogo>
              <svg width="16" height="16" viewBox="0 0 16 16" aria-hidden="true">
                <path d="M2 2h8l4 4v5H2z" fill="#f1c34a" stroke="#b58624" strokeWidth=".7" />
                <path d="M1 9q7-3 14 1v4H1z" fill="#2d5f9e" />
                <path d="M3 12q5-3 10-1" stroke="#fff" fill="none" />
                <path d="M1 1l5 6" stroke="#444" />
              </svg>
            </MenuLogo>
            {topMenus.map((m) => (
              <MenuButton key={m} type="button" $open={m.startsWith("工具")}>{m}</MenuButton>
            ))}
            <MdiButtons>
              <MdiButton type="button" aria-label="minimize drawing"><svg width="8" height="8"><path d="M1 7h6" stroke="#56718b" strokeWidth="2" /></svg></MdiButton>
              <MdiButton type="button" aria-label="restore drawing"><svg width="8" height="8"><path d="M2.500 3V.5h5v4H6M.5 3.500h5v4h-5z" stroke="#56718b" fill="none" /></svg></MdiButton>
              <MdiButton type="button" aria-label="close drawing"><svg width="8" height="8"><path d="M1 1l6 6M7 1L1 7" stroke="#56718b" strokeWidth="1.500" /></svg></MdiButton>
            </MdiButtons>
          </MenuBar>
          <Body>
            <ToolbarRow>
              <Toolbar>
                <Grip />
                <Tools names="new open save | print preview publish globe | cut copyclip paste match block" />
                <Covered $w={164} />
                <Tools names="| props design palettes sheetset markup calc | help" />
                <Covered $w={4} />
              </Toolbar>
              <Toolbar>
                <Grip />
                <Tools names="textstyle" />
                <Combo w={92} label="文字样式" value="IDQSTYLE" />
                <Tools names="| dimstyle" />
                <Combo w={93} label="标注样式" value="ISO-25" />
                <Tools names="| tablestyle" />
                <Combo w={93} label="表格样式" value="Standard" />
                <Covered $w={2} />
              </Toolbar>
            </ToolbarRow>
            <ToolbarRow>
              <Toolbar>
                <Grip />
                <Tools names="dimlin dimali dimarc dimord | dimrad dimjog dimdia dimang | qdim dimbase dimcont |" />
                <Covered $w={131} />
                <Combo w={102} label="当前标注样式" value="ISO-25" />
                <Tools names="dimstyle" />
                <Covered $w={2} />
              </Toolbar>
            </ToolbarRow>
            <ToolbarRow>
              <Toolbar>
                <Grip />
                <Combo w={162} label="工作空间" value="AutoCAD 经典" pad={6} />
                <Tools names="gear myspace" />
                <Covered $w={3} />
              </Toolbar>
              <Toolbar>
                <Grip />
                <Tools names="layers bulb" />
                <Covered $w={91} />
                <Combo w={167} label="图层" value="" />
                <Tools names="layermake layerprev" />
                <Covered $w={3} />
              </Toolbar>
              <Toolbar $grow>
                <Grip />
                <Combo w={141} label="颜色" value="ByLayer" pad={4} mark={<svg width="10" height="10" aria-hidden="true"><rect x=".5" y=".5" width="9" height="9" fill="#fff" stroke="#111" /></svg>} />
                <Divider />
                <Combo w={147} label="线型" value="ByLayer" mark={<LineMark w={56} />} />
                <Divider />
                <Combo w={147} label="线宽" value="ByLayer" pad={4} mark={<LineMark w={33} />} />
              </Toolbar>
            </ToolbarRow>
            <Workspace>
              <Dock>
                <Column names={drawTools} />
                <Column names={modifyTools} />
              </Dock>
              <Drawing>
                <Canvas>
                  <Truss width="178" height="114" viewBox="0 0 178 114" role="img" aria-label="drawing">
                    <path d="M5.500 5.500h167v101h-167zM7 107L89 5M171 107L89 5" fill="none" stroke="#f00" strokeWidth="11" strokeLinejoin="round" />
                    <rect x="46.500" y="56.500" width="84" height="51" fill="none" stroke="#e8e8e8" />
                  </Truss>
                  <UcsMark width="80" height="92" viewBox="0 -8 80 92">
                    <path d="M1.500 70.500h9v9h-9zM6.500 70V24M11 75.500h37M6.500 24l-4 11h8zM6.500 26v9" fill="none" stroke="#ddd" />
                    <path d="M48.500 71l10 4.500-10 4.500z" fill="#333" stroke="#ddd" />
                    <text x="3" y="14" fill="#ddd">Y</text>
                    <text x="67" y="81" fill="#ddd">X</text>
                  </UcsMark>
                </Canvas>
                <TabRow>
                  {["M2 1v8M9 1v8L4 5z", "M7 1v8L3 5z", "M3 1v8l4-4z", "M8 1v8M1 1v8l5-4z"].map((d, i) => (
                    <TabNav key={i} type="button" aria-label={`scroll tabs ${i + 1}`}>
                      <svg width="10" height="10" viewBox="0 0 10 10"><path d={d} fill="#000" stroke="#000" strokeWidth=".8" /></svg>
                    </TabNav>
                  ))}
                  <Tabs>
                    {["模型", "布局1", "布局2"].map((t, i) => (
                      <Tab key={t} type="button" $active={i === 0}>
                        <svg viewBox="0 0 40 14" preserveAspectRatio="none" aria-hidden="true">
                          <path d="M0 0l4 13h31l5-13" fill={i === 0 ? "#000" : "#f0f0f0"} stroke="#000" strokeWidth="1.300" />
                        </svg>
                        <span>{t}</span>
                      </Tab>
                    ))}
                  </Tabs>
                </TabRow>
              </Drawing>
              <Dock $right>
                <Column names="front back above under" even />
              </Dock>
            </Workspace>
            <Menu role="menu" aria-label="工具">
              {menu.map((group, g) => (
                <React.Fragment key={g}>
                  {g > 0 && <MenuLine />}
                  {group.map((it) => (
                    <MenuRow key={it.t} type="button" role="menuitem">
                      <MenuIcon $checked={it.checked}>{it.icon && <Icon name={it.icon} />}</MenuIcon>
                      <span>{it.t}{it.k && <>(<u>{it.k}</u>)</>}{it.end}</span>
                      {it.cut && <Shortcut>{it.cut}</Shortcut>}
                      {it.sub && <SubArrow width="4" height="7" aria-hidden="true"><path d="M0 0v7l4-3.500z" fill="#000" /></SubArrow>}
                    </MenuRow>
                  ))}
                </React.Fragment>
              ))}
            </Menu>
          </Body>
          <CommandPanel>
            <CommandGrip />
            <CommandBox>
              <CommandLog>
                <span>命令: 指定对角点: *取消*</span>
                <Spinner>
                  <SmallButton type="button" aria-label="scroll up"><svg width="6" height="3"><path d="M0 3h6L3 0z" fill="#333" /></svg></SmallButton>
                  <SmallButton type="button" aria-label="scroll down"><svg width="6" height="3"><path d="M0 0h6L3 3z" fill="#333" /></svg></SmallButton>
                </Spinner>
              </CommandLog>
              <CommandEntry>
                <label htmlFor="command">命令: </label>
                <CommandInput id="command" />
                <HScroll>
                  <SmallButton type="button" aria-label="scroll right"><svg width="17" height="6"><path d="M6 0v6l4-3z" fill="#333" /></svg></SmallButton>
                </HScroll>
              </CommandEntry>
            </CommandBox>
          </CommandPanel>
          <StatusBar>
            <svg width="10" height="10" aria-hidden="true"><path d="M8 1h2M5 4h5M2 7h8M0 9.500h10" stroke="#b5b5b5" strokeWidth="1.500" strokeDasharray="1.500 1.500" /></svg>
          </StatusBar>
        </Client>
      </Frame>
      <Balloon>
        <BalloonShape width="172" height="86" viewBox="0 0 172 86" aria-hidden="true">
          <path d="M15 .5h141q15 0 15 15v37q0 15-15 15h-25v17l-17-17H15Q.5 67.500.5 52.500v-37Q.5.500 15 .5z" fill="#ffffe1" stroke="#111" />
        </BalloonShape>
        <BalloonBody>
          <BalloonHead>
            <svg width="14" height="14" viewBox="0 0 14 14" aria-hidden="true">
              <circle cx="7" cy="7" r="6.500" fill="#2c56c4" stroke="#8ba3d8" />
              <path d="M7 3v2M7 6v5M5.500 11h3" stroke="#fff" strokeWidth="1.500" />
            </svg>
            <h2>通讯中心</h2>
            <CloseButton type="button" aria-label="close message"><svg width="8" height="8"><path d="M1 1l6 6M7 1L1 7" stroke="#000" strokeWidth="2" /></svg></CloseButton>
          </BalloonHead>
          <BalloonText>使软件保持最新的简单方法。</BalloonText>
          <BalloonText><a href="#update">单击此处。</a></BalloonText>
        </BalloonBody>
      </Balloon>
      <Watermark>
        <WatermarkBrand>
          <span>Bai</span>
          <svg width="54" height="58" viewBox="0 0 56 58" aria-hidden="true">
            <g fill="#e2e2de">
              <ellipse cx="20" cy="10" rx="6" ry="9" />
              <ellipse cx="36" cy="10" rx="6" ry="9" />
              <ellipse cx="7" cy="23" rx="6" ry="8" />
              <ellipse cx="47" cy="26" rx="6" ry="8" />
              <path d="M28 23q6 0 10 8 12 9 9 17-3 9-19 6-16 3-20-5-3-9 10-18 4-8 10-8z" />
            </g>
            <text x="15" y="49" fill="#fffff0" fontSize="22">du</text>
          </svg>
          <small>经验</small>
        </WatermarkBrand>
        <WatermarkUrl>jingyan.baidu.com</WatermarkUrl>
      </Watermark>
      <Pointer $x={208} $y={51} width="64" height="82" aria-hidden="true">
        <path d="M2 80L52 12" stroke="#f00" strokeWidth="3" />
        <path d="M61 1l-4 19-11-8z" fill="#f00" />
      </Pointer>
      <Pointer $x={239} $y={557} width="70" height="48" aria-hidden="true">
        <path d="M2 45L58 9" stroke="#f00" strokeWidth="3" />
        <path d="M67 3L57 17l-8-11z" fill="#f00" />
      </Pointer>
    </Desktop>
  );
}
